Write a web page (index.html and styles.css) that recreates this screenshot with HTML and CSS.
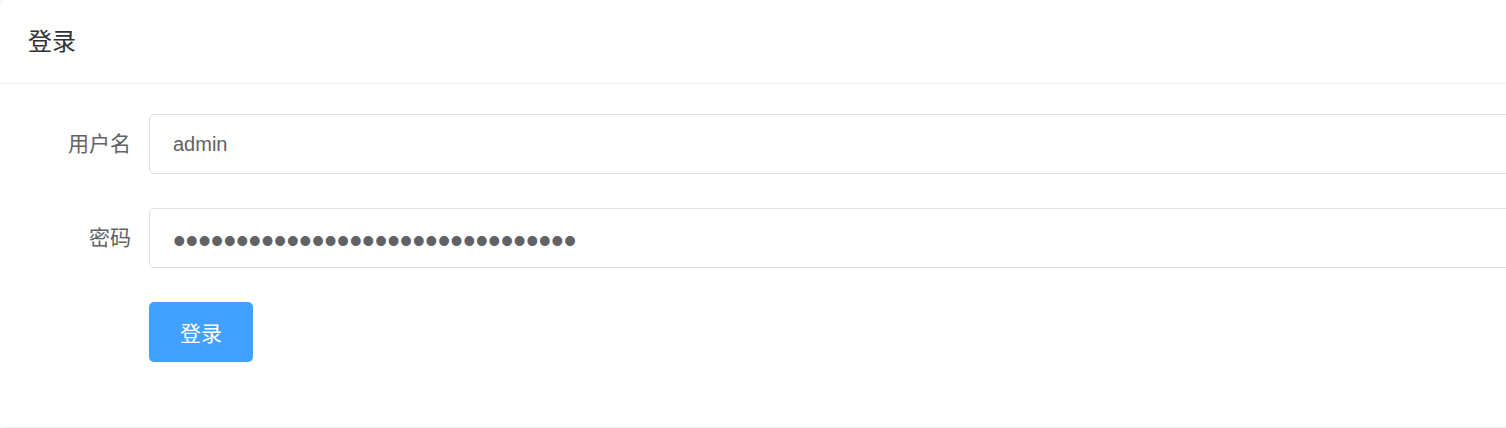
FILE: index.html
```html
<!DOCTYPE html>
<html lang="zh-CN">
<head>
<meta charset="utf-8">
<title>登录</title>
<link rel="stylesheet" href="styles.css">
</head>
<body>
<div class="card">
  <div class="card-header">
    <span class="card-title">登录</span>
  </div>
  <div class="card-body">
    <form class="form">
      <div class="form-item">
        <label class="form-label" for="username">用户名</label>
        <div class="form-content">
          <input class="input" id="username" type="text" value="admin">
        </div>
      </div>
      <div class="form-item">
        <label class="form-label" for="password">密码</label>
        <div class="form-content">
          <input class="input input-password" id="password" type="password" value="12345678901234567890123456789012">
        </div>
      </div>
      <div class="form-item">
        <div class="form-label"></div>
        <div class="form-content">
          <button class="btn-primary" type="button">登录</button>
        </div>
      </div>
    </form>
  </div>
</div>
</body>
</html>
```

FILE: styles.css
```css
html, body {
  margin: 0;
  padding: 0;
  overflow: hidden;
  background: #ffffff;
}

body {
  font-family: "Liberation Sans", "Noto Sans CJK SC", sans-serif;
  color: #606266;
}

.card {
  width: 1600px;
  margin: -1px 0 0 -1px;
  border: 1px solid #ebeef5;
  border-radius: 4px;
  background: #ffffff;
  box-sizing: border-box;
}

.card-header {
  height: 83px;
  box-sizing: content-box;
  display: flex;
  align-items: center;
  padding: 0 28px;
  border-bottom: 1px solid #ebeef5;
}

.card-title {
  font-size: 24px;
  color: #303133;
  line-height: 1;
}

.card-body {
  padding: 30px 0 31px;
}

.form-item {
  display: flex;
  align-items: center;
  height: 60px;
  margin-bottom: 34px;
}

.form-label {
  width: 131px;
  padding-right: 18px;
  flex: 0 0 auto;
  text-align: right;
  font-size: 21px;
  color: #606266;
  line-height: 60px;
}

.form-content {
  flex: 1;
  display: flex;
  height: 60px;
}

.input {
  flex: 1;
  height: 60px;
  box-sizing: border-box;
  border: 1px solid #dcdfe6;
  border-radius: 5px;
  padding: 0 23px;
  font-family: "Liberation Sans", "Noto Sans CJK SC", sans-serif;
  font-size: 20px;
  color: #606266;
  background: #ffffff;
  outline: none;
}

.input-password {
  font-size: 36px;
  padding: 6px 23px 0;
}

.btn-primary {
  width: 104px;
  height: 60px;
  border: none;
  border-radius: 5px;
  background: #42a1ff;
  color: #ffffff;
  font-family: "Liberation Sans", "Noto Sans CJK SC", sans-serif;
  font-size: 21px;
  padding: 0;
  cursor: pointer;
}
```
